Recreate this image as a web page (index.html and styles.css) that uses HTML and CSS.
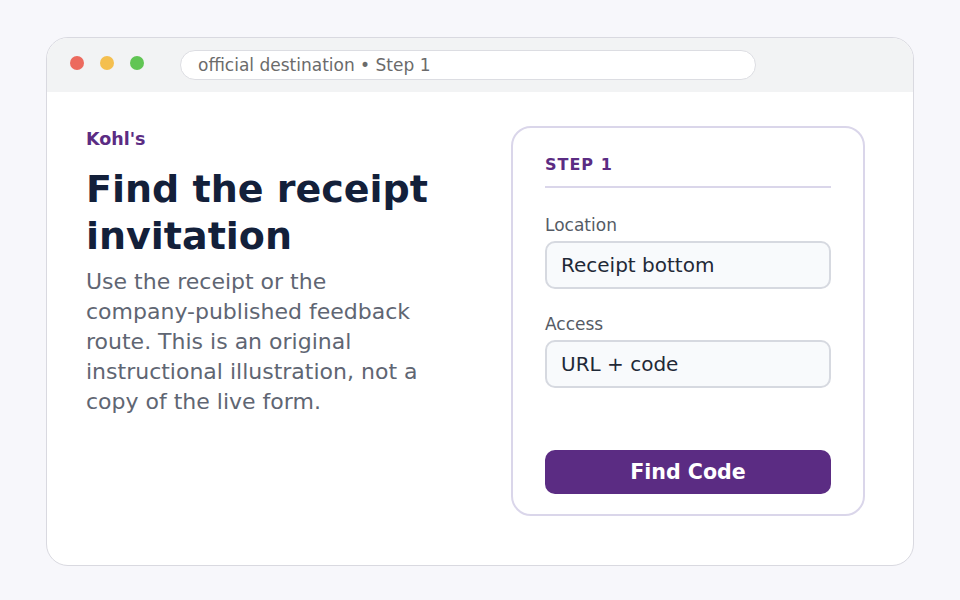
FILE: index.html
```html
<!DOCTYPE html>
<html lang="en">
<head>
    <meta charset="UTF-8">
    <meta name="viewport" content="width=device-width, initial-scale=1.0">
    <title>Find the receipt invitation</title>
    <link rel="stylesheet" href="styles.css">
</head>
<body>

<div class="window">
    <div class="titlebar">
        <span class="dot red"></span>
        <span class="dot yellow"></span>
        <span class="dot green"></span>
        <div class="address">official destination &bull; Step 1</div>
    </div>

    <div class="content">
        <div class="intro">
            <div class="brand">Kohl's</div>
            <h1>Find the receipt invitation</h1>
            <p>Use the receipt or the company-published feedback route. This is an original instructional illustration, not a copy of the live form.</p>
        </div>

        <div class="card">
            <div class="step">STEP 1</div>

            <label for="location">Location</label>
            <div class="field" id="location">Receipt bottom</div>

            <label for="access">Access</label>
            <div class="field" id="access">URL + code</div>

            <button type="button">Find Code</button>
        </div>
    </div>
</div>

</body>
</html>
```

FILE: styles.css
```css
body {
    font-family: "DejaVu Sans", sans-serif;
    margin: 0;
    padding: 0;
    background-color: #f7f7fb;
}
.window {
    width: 868px;
    margin: 37px 0 0 46px;
    background-color: white;
    border: 1px solid #d9d9e0;
    border-radius: 22px;
    box-sizing: border-box;
    overflow: hidden;
}
.titlebar {
    display: flex;
    align-items: center;
    height: 54px;
    padding: 0 23px;
    background-color: #f2f3f4;
}
.dot {
    width: 14px;
    height: 14px;
    border-radius: 50%;
    margin-right: 16px;
    margin-top: -4px;
}
.red { background-color: #ec6a5e; }
.yellow { background-color: #f4bf4f; }
.green { background-color: #61c554; }
.address {
    width: 576px;
    height: 30px;
    margin-left: 20px;
    padding: 0 17px;
    box-sizing: border-box;
    background-color: white;
    border: 1px solid #dcdde2;
    border-radius: 15px;
    font-size: 17px;
    line-height: 28px;
    color: #6b6b6b;
}
.content {
    display: grid;
    grid-template-columns: 1fr 354px;
    gap: 40px;
    padding: 34px 48px 49px 39px;
}
.intro {
    max-width: 348px;
    padding-top: 1px;
}
.brand {
    font-size: 17.5px;
    font-weight: bold;
    line-height: 24px;
    color: #5b2c83;
}
h1 {
    margin: 15px 0 0;
    font-size: 38px;
    line-height: 47px;
    color: #13203a;
}
p {
    margin: 7px 0 0;
    font-size: 22px;
    line-height: 30px;
    color: #5f6673;
}
.card {
    display: flex;
    flex-direction: column;
    border: 2px solid #dad6ea;
    border-radius: 20px;
    padding: 25px 32px 20px;
}
.step {
    font-size: 16px;
    font-weight: bold;
    letter-spacing: 1px;
    line-height: 24px;
    color: #5b2c83;
    padding-bottom: 9px;
    border-bottom: 2px solid #dad6ea;
    margin-bottom: 27px;
}
label {
    display: block;
    font-size: 17px;
    line-height: 20px;
    color: #555b65;
    margin-bottom: 6px;
}
.field {
    height: 48px;
    box-sizing: border-box;
    padding: 0 14px;
    border: 2px solid #d6d9e0;
    border-radius: 10px;
    background-color: #f8fafc;
    font-size: 20px;
    line-height: 44px;
    color: #1f2937;
    margin-bottom: 25px;
}
button {
    margin-top: 37px;
    height: 44px;
    border: none;
    border-radius: 10px;
    background-color: #5b2c83;
    color: white;
    font-family: "DejaVu Sans", sans-serif;
    font-size: 20.6px;
    font-weight: bold;
    cursor: pointer;
}
```
